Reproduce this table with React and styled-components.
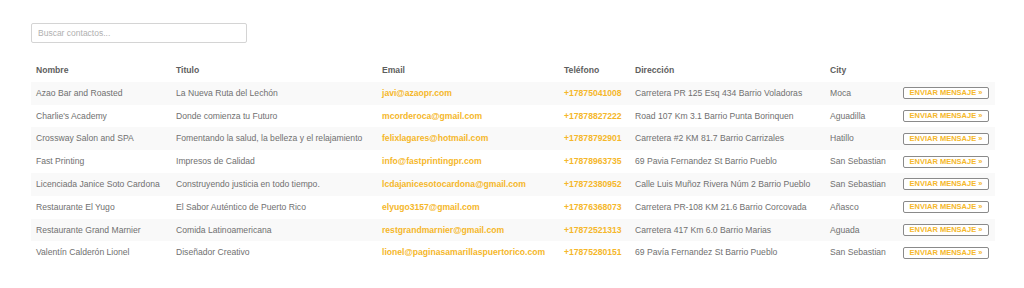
import React from "react";
import styled, { createGlobalStyle } from "styled-components";

const Global = createGlobalStyle`
  html, body { margin: 0; padding: 0; background: #fff; }
  body { font-family: "Liberation Sans", Arial, sans-serif; }
`;

const Page = styled.div`
  padding: 23px 29px 0 31px;
`;

const Search = styled.input`
  display: block;
  box-sizing: border-box;
  width: 216px;
  height: 20px;
  padding: 0 6px;
  border: 1px solid #d4d4d4;
  border-radius: 2px;
  font-family: "Liberation Sans", Arial, sans-serif;
  font-size: 8.5px;
  color: #555;
  outline: none;
  &::placeholder { color: #b0b0b0; }
`;

const Table = styled.table`
  margin-top: 16px;
  width: 964px;
  border-collapse: collapse;
  table-layout: fixed;
  font-size: 8.6px;
  color: #707070;
`;

const Th = styled.th`
  text-align: left;
  font-weight: bold;
  color: #5e5e5e;
  padding: 5px;
  height: 12.8px;
  line-height: 12.8px;
  white-space: nowrap;
`;

const Row = styled.tr`
  background: ${(p) => (p.$striped ? "#f9f9f9" : "#fff")};
`;

const Td = styled.td`
  padding: 5px;
  line-height: 12.8px;
  height: 12.8px;
  white-space: nowrap;
  overflow: hidden;
  color: ${(p) => (p.$accent ? "#f5b72a" : "#707070")};
  font-weight: ${(p) => (p.$accent ? "bold" : "normal")};
`;

const Button = styled.button`
  display: block;
  box-sizing: border-box;
  width: 86px;
  height: 12px;
  padding: 0;
  border: 1px solid #8a8a8a;
  border-radius: 2px;
  background: #fff;
  color: #f5b72a;
  font-family: "Liberation Sans", Arial, sans-serif;
  font-size: 7.5px;
  font-weight: bold;
  line-height: 10px;
  text-align: center;
  cursor: pointer;
`;

const cols = [140, 206, 182, 71, 195, 73, 97];

const data = [
  ["Azao Bar and Roasted", "La Nueva Ruta del Lechón", "javi@azaopr.com", "+17875041008", "Carretera PR 125 Esq 434 Barrio Voladoras", "Moca"],
  ["Charlie's Academy", "Donde comienza tu Futuro", "mcorderoca@gmail.com", "+17878827222", "Road 107 Km 3.1 Barrio Punta Borinquen", "Aguadilla"],
  ["Crossway Salon and SPA", "Fomentando la salud, la belleza y el relajamiento", "felixlagares@hotmail.com", "+17878792901", "Carretera #2 KM 81.7 Barrio Carrizales", "Hatillo"],
  ["Fast Printing", "Impresos de Calidad", "info@fastprintingpr.com", "+17878963735", "69 Pavia Fernandez St Barrio Pueblo", "San Sebastian"],
  ["Licenciada Janice Soto Cardona", "Construyendo justicia en todo tiempo.", "lcdajanicesotocardona@gmail.com", "+17872380952", "Calle Luis Muñoz Rivera Núm 2 Barrio Pueblo", "San Sebastian"],
  ["Restaurante El Yugo", "El Sabor Auténtico de Puerto Rico", "elyugo3157@gmail.com", "+17876368073", "Carretera PR-108 KM 21.6 Barrio Corcovada", "Añasco"],
  ["Restaurante Grand Marnier", "Comida Latinoamericana", "restgrandmarnier@gmail.com", "+17872521313", "Carretera 417 Km 6.0 Barrio Marias", "Aguada"],
  ["Valentín Calderón Lionel", "Diseñador Creativo", "lionel@paginasamarillaspuertorico.com", "+17875280151", "69 Pavía Fernandez St Barrio Pueblo", "San Sebastian"],
];

export default function App() {
  return (
    <>
      <Global />
      <Page>
        <Search placeholder="Buscar contactos..." />
        <Table>
          <colgroup>
            {cols.map((w, i) => (
              <col key={i} style={{ width: w }} />
            ))}
          </colgroup>
          <thead>
            <tr>
              <Th>Nombre</Th>
              <Th>Titulo</Th>
              <Th>Email</Th>
              <Th>Teléfono</Th>
              <Th>Dirección</Th>
              <Th>City</Th>
              <Th></Th>
            </tr>
          </thead>
          <tbody>
            {data.map((r, i) => (
              <Row key={i} $striped={i % 2 === 0}>
                <Td>{r[0]}</Td>
                <Td>{r[1]}</Td>
                <Td $accent>{r[2]}</Td>
                <Td $accent>{r[3]}</Td>
                <Td>{r[4]}</Td>
                <Td>{r[5]}</Td>
                <Td>
                  <Button>ENVIAR MENSAJE »</Button>
                </Td>
              </Row>
            ))}
          </tbody>
        </Table>
      </Page>
    </>
  );
}
